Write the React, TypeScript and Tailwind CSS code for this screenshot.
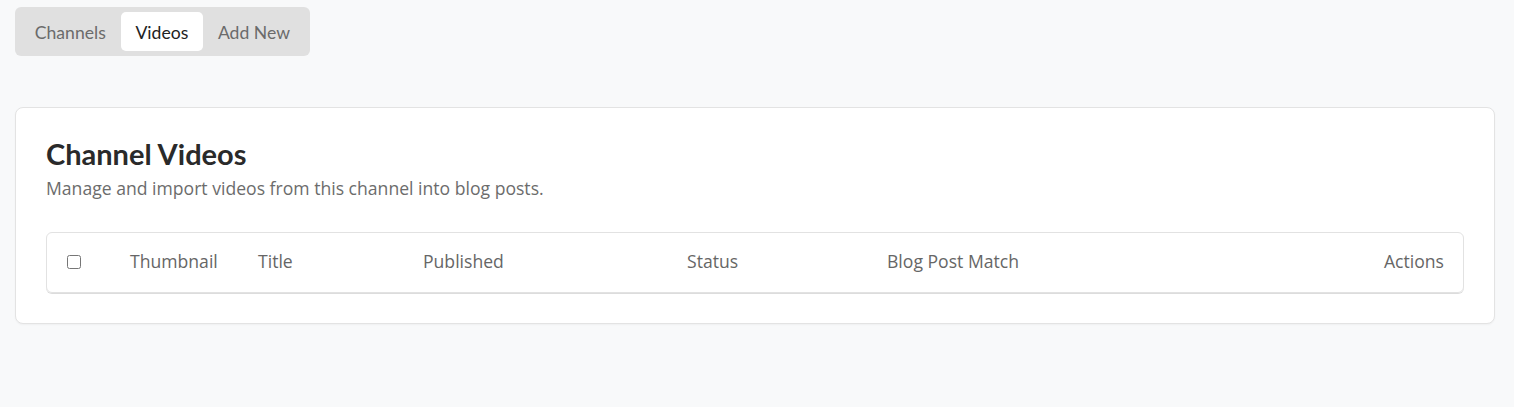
import { useState } from 'react'

const tabs = ['Channels', 'Videos', 'Add New']

const columns = ['Thumbnail', 'Title', 'Published', 'Status', 'Blog Post Match']

export default function App() {
  const [active, setActive] = useState('Videos')

  return (
    <div className="min-h-[407px] bg-[#f8f9fa] pl-[15px] pr-[19px] pt-[7px] font-['Open_Sans',sans-serif]">
      {/* tabs */}
      <div className="inline-flex rounded-md bg-[#e0e0e0] p-[5px] font-['Lato',sans-serif] text-[17.6px]">
        {tabs.map((tab) => (
          <button
            key={tab}
            onClick={() => setActive(tab)}
            className={`h-[39px] rounded-[5px] px-[14.8px] pt-[4px] ${
              active === tab ? 'bg-white text-[#222]' : 'text-[#6b6b6b]'
            }`}
          >
            {tab}
          </button>
        ))}
      </div>

      {/* card */}
      <div className="mt-[51px] rounded-lg border border-[#e3e3e3] bg-white px-[30px] pb-[30px] pt-[28px] shadow-[0_1px_2px_rgba(0,0,0,0.04)]">
        <h2 className="font-['Lato',sans-serif] text-[29px] font-bold leading-[35px] text-[#2a2a2a]">
          Channel Videos
        </h2>
        <p className="mt-[4px] text-[17.6px] leading-[26px] text-[#6c6c6c]">
          Manage and import videos from this channel into blog posts.
        </p>

        <div className="mt-[31px] rounded-md border border-[#e2e2e2] shadow-[0_1px_0_#dcdcdc]">
          <div className="grid h-[59px] grid-cols-[67px_128px_165px_264px_200px_1fr_auto] items-center pb-[2px] text-[17.6px] text-[#666]">
            <div className="pl-[20px]">
              <input type="checkbox" className="block h-[14px] w-[14px] accent-gray-600" />
            </div>
            {columns.map((c) => (
              <div key={c} className="pl-4">
                {c}
              </div>
            ))}
            <div className="pr-[19px] text-right">Actions</div>
          </div>
        </div>
      </div>
    </div>
  )
}
